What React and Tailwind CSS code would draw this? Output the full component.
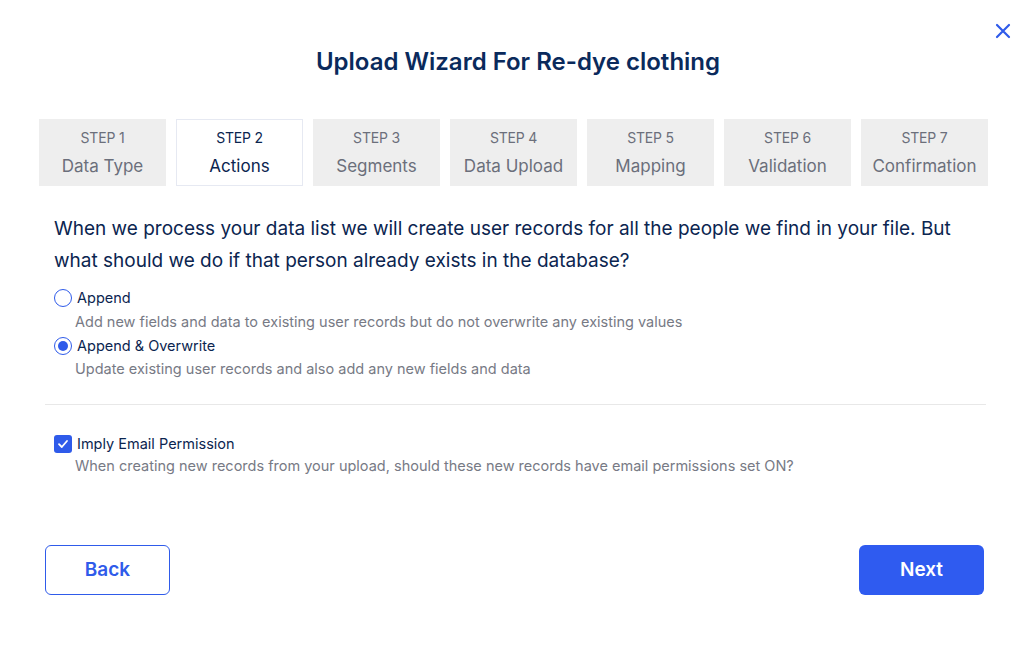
// App.jsx
// Upload wizard modal, step 2 (Actions)

import React, { useState } from 'react';

const steps = [
  { n: 1, label: 'Data Type' },
  { n: 2, label: 'Actions' },
  { n: 3, label: 'Segments' },
  { n: 4, label: 'Data Upload' },
  { n: 5, label: 'Mapping' },
  { n: 6, label: 'Validation' },
  { n: 7, label: 'Confirmation' },
];

const Radio = ({ checked }) => (
  <span className="flex w-[18px] h-[18px] rounded-full border border-[#2f5bea] items-center justify-center shrink-0">
    {checked && <span className="w-[10px] h-[10px] rounded-full bg-[#2f5bea]" />}
  </span>
);

const App = () => {
  const [mode, setMode] = useState('overwrite');
  const [implyEmail, setImplyEmail] = useState(true);
  const active = 2;

  return (
    <div className="w-[1036px] h-[645px] bg-white relative font-['Inter',sans-serif] text-[#0b2550]">
      <button className="absolute top-[22px] right-[24px] text-[#2f5bea]">
        <svg width="18" height="18" viewBox="0 0 18 18" fill="none" stroke="currentColor" strokeWidth="2.2" strokeLinecap="round">
          <path d="M3 3 L15 15 M15 3 L3 15" />
        </svg>
      </button>

      <h1 className="pt-[46px] text-center text-[24px] font-semibold text-[#0a2a5c] leading-[32px]">
        Upload Wizard For Re-dye clothing
      </h1>

      <div className="mt-[41px] ml-[39px] flex gap-[10px]">
        {steps.map((s) => (
          <div
            key={s.n}
            className={
              'w-[127px] h-[67px] flex flex-col items-center pt-[10px] ' +
              (s.n === active
                ? 'bg-white shadow-[inset_0_0_0_1px_#e6e9f2] text-[#0b2550]'
                : 'bg-[#eeeeee] text-[#6b6f7b]')
            }
          >
            <div className="text-[14px] leading-[18px] tracking-[-0.2px]">STEP {s.n}</div>
            <div className="text-[17px] leading-[24px] mt-[7px]">{s.label}</div>
          </div>
        ))}
      </div>

      <div className="px-[45px] mt-[27px]">
        <p className="pl-[9px] pr-[40px] text-[19px] leading-[32px] text-[#0b2550]">
          When we process your data list we will create user records for all the people we find in your file. But
          what should we do if that person already exists in the database?
        </p>

        <div className="mt-[12px] pl-[9px]">
          <label className="flex items-center gap-[5px] cursor-pointer" onClick={() => setMode('append')}>
            <Radio checked={mode === 'append'} />
            <span className="text-[14.5px] leading-[18px]">Append</span>
          </label>
          <div className="ml-[21px] mt-[6px] text-[14.5px] leading-[18px] text-[#777a85]">
            Add new fields and data to existing user records but do not overwrite any existing values
          </div>
          <label className="mt-[6px] flex items-center gap-[5px] cursor-pointer" onClick={() => setMode('overwrite')}>
            <Radio checked={mode === 'overwrite'} />
            <span className="text-[14.5px] leading-[18px]">Append &amp; Overwrite</span>
          </label>
          <div className="ml-[21px] mt-[5px] text-[14.5px] leading-[18px] text-[#777a85]">
            Update existing user records and also add any new fields and data
          </div>
        </div>

        <div className="mt-[26px] mr-[5px] border-t border-[#e8e8e8]" />

        <div className="mt-[30px] pl-[9px]">
          <label className="flex items-center gap-[5px] cursor-pointer" onClick={() => setImplyEmail((v) => !v)}>
            <span
              className={
                'w-[18px] h-[18px] rounded-[3px] flex items-center justify-center shrink-0 ' +
                (implyEmail ? 'bg-[#2f5bea]' : 'border border-[#2f5bea]')
              }
            >
              {implyEmail && (
                <svg width="12" height="12" viewBox="0 0 12 12" fill="none" stroke="white" strokeWidth="1.8" strokeLinecap="round" strokeLinejoin="round">
                  <path d="M2 6.2 L4.8 9 L10 3" />
                </svg>
              )}
            </span>
            <span className="text-[14.5px] leading-[18px]">Imply Email Permission</span>
          </label>
          <div className="ml-[21px] mt-[4px] text-[14.5px] leading-[18px] text-[#777a85]">
            When creating new records from your upload, should these new records have email permissions set ON?
          </div>
        </div>

        <div className="mt-[70px] flex justify-between pr-[7px]">
          <button className="w-[125px] h-[50px] rounded-[6px] border border-[#2f5bea] text-[#2f5bea] text-[19px] font-semibold">
            Back
          </button>
          <button className="w-[125px] h-[50px] rounded-[6px] bg-[#2f5bf0] text-white text-[19px] font-semibold">
            Next
          </button>
        </div>
      </div>
    </div>
  );
};

export default App;
